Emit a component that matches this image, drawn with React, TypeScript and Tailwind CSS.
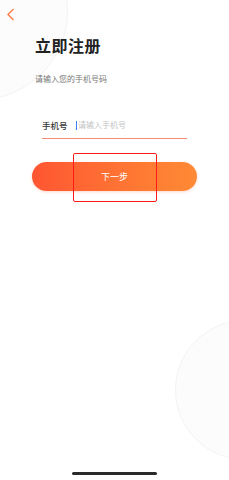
export default function App() {
  return (
    <div
      className="relative h-[480px] w-[229px] overflow-hidden bg-white"
      style={{ fontFamily: '"Noto Sans CJK SC", "Noto Sans", sans-serif' }}
    >
      {/* decorative circles */}
      <div className="absolute left-[-110px] top-[-78px] h-[178px] w-[178px] rounded-full border border-[#f3f3f3] bg-[#fcfcfc]" />
      <div className="absolute left-[175px] top-[320px] h-[140px] w-[140px] rounded-full border border-[#f3f3f3] bg-[#fcfcfc]" />

      <div className="relative flex h-full flex-col">
        <div className="flex h-[29px] items-center pl-[6px]">
          <svg width="9" height="13" viewBox="0 0 9 13" fill="none">
            <path d="M7.5 1 L2 6.5 L7.5 12" stroke="#ff7a45" strokeWidth="1.4" />
          </svg>
        </div>

        <h1 className="ml-[35px] mt-[4px] text-[16px] font-bold leading-[24px] tracking-[0.5px] text-[#222]">
          立即注册
        </h1>
        <p className="ml-[35px] mt-[16px] text-[8px] leading-[12px] text-[#777]">
          请输入您的手机号码
        </p>

        <div className="mx-[42px] mt-[33px] flex items-center border-b border-[#f28a78] pb-[6px]">
          <span className="w-[34px] text-[8.5px] font-medium leading-[14px] text-[#333]">手机号</span>
          <span className="h-[9px] w-[1px] bg-[#3b82f6]" />
          <span className="ml-[1px] text-[8px] leading-[14px] text-[#c4c4c4]">请输入手机号</span>
        </div>

        <div className="relative mx-[32px] mt-[23px]">
          <button className="flex h-[29px] w-full items-center justify-center rounded-full bg-gradient-to-r from-[#ff5532] to-[#ff8a34] text-[9px] text-white shadow-[0_1px_3px_rgba(255,100,60,0.25)]">
            下一步
          </button>
          <div className="absolute left-[41px] top-[-9px] h-[49px] w-[84px] rounded-[2px] border-[1.5px] border-[#ff1a1a]" />
        </div>

        <div className="mt-auto mb-[5px] flex justify-center">
          <div className="h-[3px] w-[85px] rounded-full bg-[#2a2a2a]" />
        </div>
      </div>
    </div>
  );
}
